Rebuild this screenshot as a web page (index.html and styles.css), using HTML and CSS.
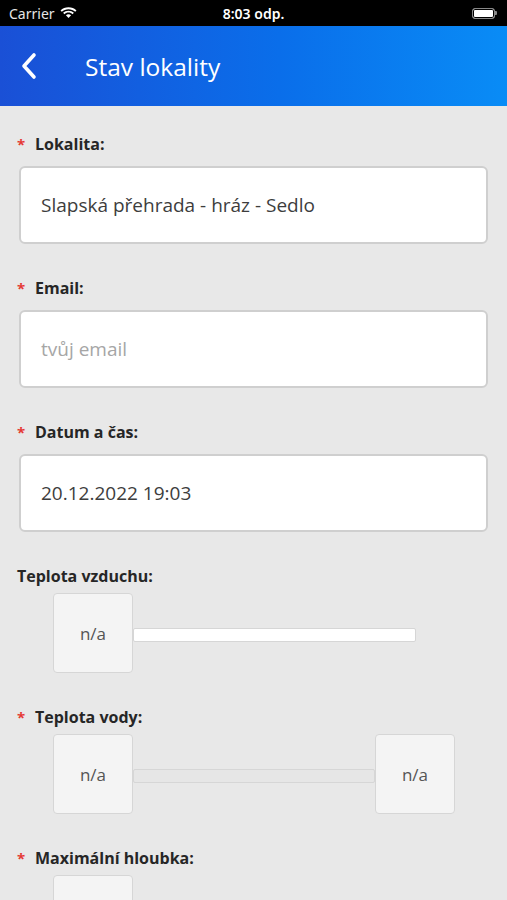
FILE: index.html
```html
<!DOCTYPE html>
<html>
<head>
<meta charset="utf-8">
<title>Stav lokality</title>
<link rel="stylesheet" href="styles.css">
</head>
<body>
    <div class="statusbar">
        <div class="carrier">Carrier
            <svg class="wifi" width="17" height="12" viewBox="0 0 17 12">
                <path d="M8.5 2.2c2.6 0 4.9 1 6.7 2.6l1.3-1.4C14.4 1.4 11.6.2 8.5.2S2.6 1.4.5 3.4l1.3 1.4C3.6 3.2 5.9 2.2 8.5 2.2z" fill="#fff"/>
                <path d="M8.5 5.6c1.6 0 3 .6 4.1 1.6l1.3-1.4C12.5 4.5 10.6 3.7 8.5 3.7S4.5 4.5 3.1 5.8l1.3 1.4c1.1-1 2.5-1.6 4.1-1.6z" fill="#fff"/>
                <path d="M8.5 7.2c-1 0-1.9.4-2.6 1L8.5 11l2.6-2.8c-.7-.6-1.6-1-2.6-1z" fill="#fff"/>
            </svg>
        </div>
        <div class="time">8:03 odp.</div>
        <div class="battery"><span class="level"></span><span class="nub"></span></div>
    </div>

    <div class="navbar">
        <svg class="back" width="18" height="28" viewBox="0 0 18 28">
            <path d="M14 3 L4 14 L14 25" fill="none" stroke="#fff" stroke-width="3.6" stroke-linecap="round" stroke-linejoin="round"/>
        </svg>
        <h1>Stav lokality</h1>
    </div>

    <div class="form">
        <div class="field">
            <label><span class="req">*</span>Lokalita:</label>
            <div class="input">Slapská přehrada - hráz - Sedlo</div>
        </div>

        <div class="field">
            <label><span class="req">*</span>Email:</label>
            <div class="input placeholder">tvůj email</div>
        </div>

        <div class="field">
            <label><span class="req">*</span>Datum a čas:</label>
            <div class="input">20.12.2022 19:03</div>
        </div>

        <div class="field">
            <label>Teplota vzduchu:</label>
            <div class="slider">
                <div class="valbox">n/a</div>
                <div class="track white"></div>
            </div>
        </div>

        <div class="field">
            <label><span class="req">*</span>Teplota vody:</label>
            <div class="slider">
                <div class="valbox">n/a</div>
                <div class="track grey"></div>
                <div class="valbox">n/a</div>
            </div>
        </div>

        <div class="field">
            <label><span class="req">*</span>Maximální hloubka:</label>
            <div class="slider">
                <div class="valbox"></div>
            </div>
        </div>
    </div>
</body>
</html>
```

FILE: styles.css
```css
body {
    margin: 0;
    background-color: #e8e8e8;
    font-family: "Open Sans", "Noto Sans", sans-serif;
    height: 900px;
    overflow: hidden;
}

.statusbar {
    height: 26px;
    background-color: #000;
    color: #fff;
    display: flex;
    align-items: center;
    justify-content: space-between;
    padding: 0 9px;
    font-family: "Noto Sans", sans-serif;
    font-size: 14px;
    position: relative;
}

.carrier {
    display: flex;
    align-items: center;
    gap: 5px;
    color: #e6e6e6;
}

.time {
    position: absolute;
    left: 0;
    right: 0;
    text-align: center;
    font-weight: 600;
    font-size: 14px;
}

.battery {
    display: flex;
    align-items: center;
    margin-right: 1px;
}

.battery .level {
    width: 21px;
    height: 9px;
    border: 1.5px solid #888;
    border-radius: 3px;
    background-color: #fff;
    box-shadow: inset 0 0 0 1px #000;
}

.battery .nub {
    width: 2px;
    height: 4px;
    background-color: #888;
    border-radius: 0 1px 1px 0;
}

.navbar {
    height: 80px;
    background: linear-gradient(90deg, #1a50d6 0%, #0a6eea 55%, #098cf6 100%);
    display: flex;
    align-items: center;
    padding-left: 20px;
}

.navbar h1 {
    margin: 0 0 0 47px;
    color: #fff;
    font-weight: 400;
    font-size: 24.5px;
}

.form {
    padding: 27px 17px 0 17px;
}

.field {
    margin-bottom: 33px;
}

label {
    display: block;
    height: 22px;
    line-height: 22px;
    font-size: 16px;
    font-weight: 700;
    color: #262626;
}

.req {
    color: #e53935;
    font-size: 15px;
    display: inline-block;
    width: 18px;
}

.input {
    margin: 11px 2px 0 2px;
    height: 74px;
    background-color: #fff;
    border: 2px solid #cfcfcf;
    border-radius: 6px;
    display: flex;
    align-items: center;
    padding-left: 20px;
    font-size: 19px;
    color: #3d3d3d;
}

.placeholder {
    color: #a6a6a6;
}

.slider {
    margin: 6px 0 0 36px;
    display: flex;
    align-items: center;
}

.valbox {
    width: 78px;
    height: 78px;
    background-color: #f4f4f4;
    border: 1px solid #d6d6d6;
    border-radius: 4px;
    display: flex;
    align-items: center;
    justify-content: center;
    font-size: 17px;
    color: #555;
}

.track {
    height: 12px;
    margin-top: 4px;
    border: 1px solid #d6d6d6;
    border-radius: 2px;
}

.track.white {
    width: 281px;
    background-color: #fff;
}

.track.grey {
    width: 240px;
    background-color: #e6e6e6;
}
```
